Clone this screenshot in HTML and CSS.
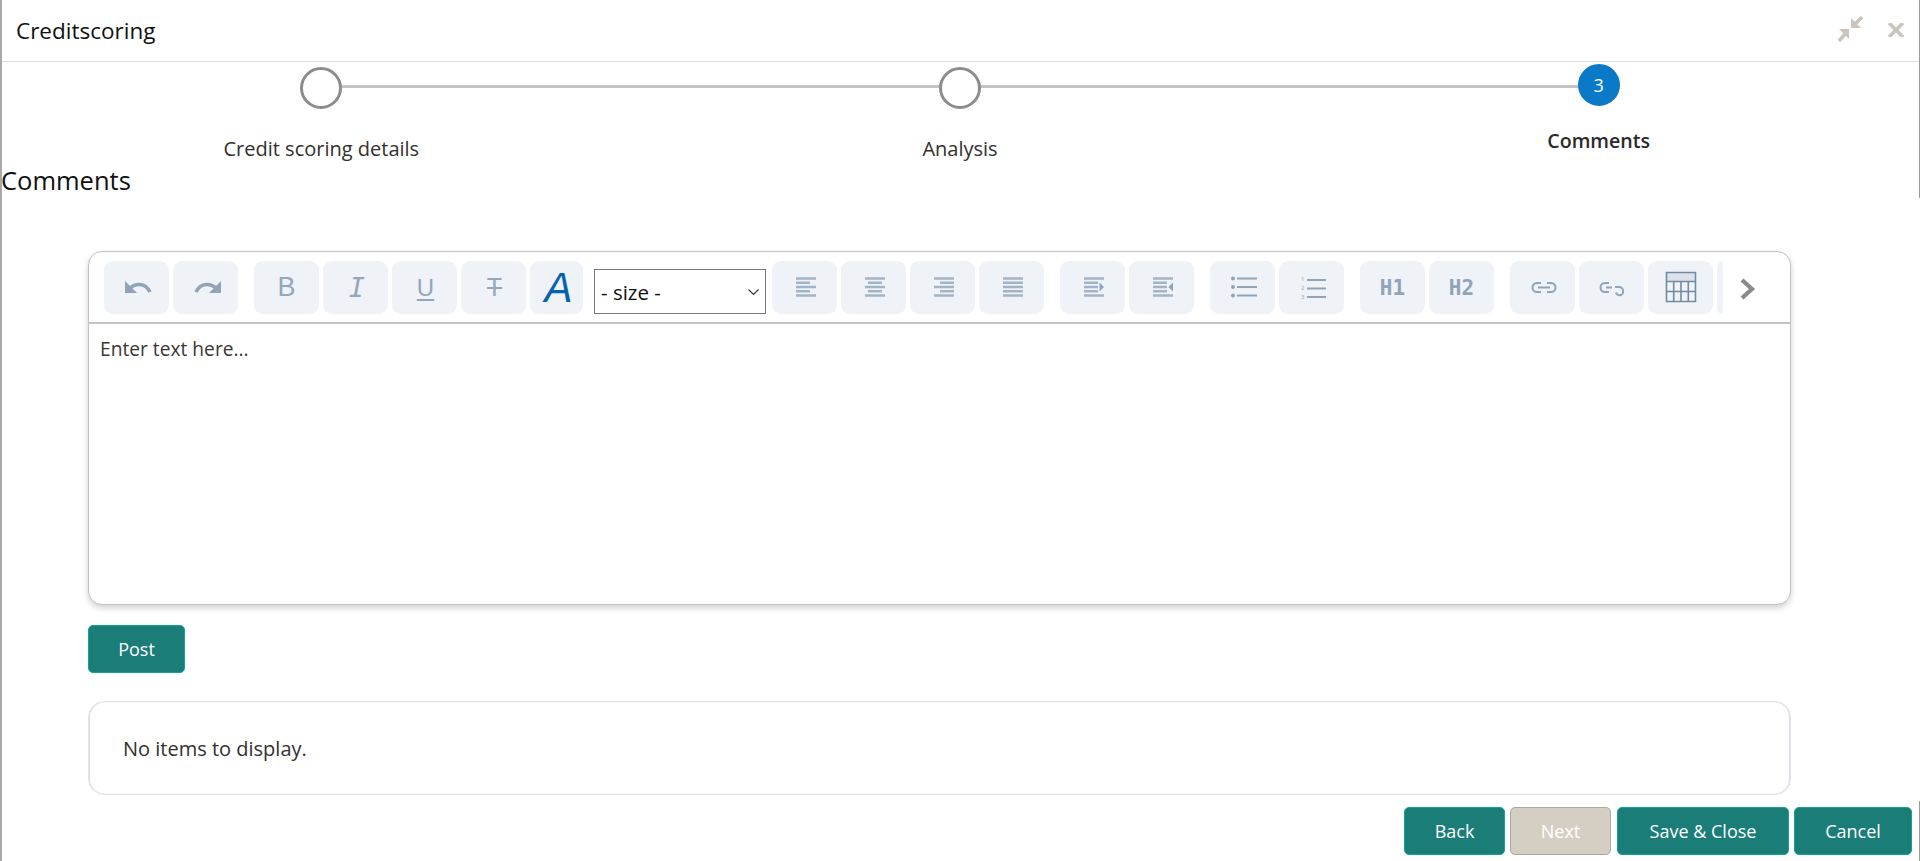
FILE: index.html
```html
<!DOCTYPE html>
<html lang="en">
<head>
<meta charset="utf-8">
<title>Creditscoring</title>
<link rel="stylesheet" href="styles.css">
</head>
<body>
<div class="page">
  <span class="edge edge-top"></span>
  <span class="edge edge-bottom"></span>
  <header class="header">
    <h1 class="title">Creditscoring</h1>
    <div class="window-actions">
      <svg class="ico-compress" viewBox="0 0 26 26" width="26" height="26"><path class="wa-fill" d="M14 12V2l10 10z"/><path class="wa-line" d="M17 9l8-8"/><path class="wa-fill" d="M12 13H2l10 10z"/><path class="wa-line" d="M9 17l-7 8"/></svg>
      <svg class="ico-close" viewBox="0 0 16 14" width="16" height="14"><path class="wa-line" d="M1 0l14 14M15 0L1 14"/></svg>
    </div>
  </header>

  <ol class="stepper">
    <li class="step step-first"><span class="dot"></span><span class="step-label">Credit scoring details</span></li>
    <li class="step step-mid"><span class="dot"></span><span class="step-label">Analysis</span></li>
    <li class="step step-current"><span class="dot dot-current">3</span><span class="step-label">Comments</span></li>
  </ol>

  <h2 class="section-title">Comments</h2>

  <main class="content">
    <section class="editor">
      <div class="toolbar">
        <div class="group">
          <button class="tb"><svg viewBox="0 0 65 53"><path class="f" d="M21 20v12h12z"/><path class="s3" d="M25 28c6-6 16-7 21 3"/></svg></button>
          <button class="tb"><svg viewBox="0 0 65 53"><path class="f" d="M48 20v12H36z"/><path class="s3" d="M44 28c-6-6-16-7-21 3"/></svg></button>
        </div>
        <div class="group">
          <button class="tb tb-b">B</button>
          <button class="tb tb-i">I</button>
          <button class="tb tb-u">U</button>
          <button class="tb tb-t">T</button>
          <button class="tb tb-a">A</button>
          <div class="size-wrap">
            <select class="size"><option>- size -</option></select>
            <svg class="size-arrow" viewBox="0 0 11 6" width="11" height="6"><path d="M.5.5l5 5 5-5"/></svg>
          </div>
          <button class="tb"><svg viewBox="0 0 65 53"><path class="l" d="M24 17.5h20M24 21.8h14M24 26h20M24 30.2h14M24 34.5h20"/></svg></button>
          <button class="tb"><svg viewBox="0 0 65 53"><path class="l" d="M24 17.5h20M27 21.8h14M24 26h20M27 30.2h14M24 34.5h20"/></svg></button>
          <button class="tb"><svg viewBox="0 0 65 53"><path class="l" d="M24 17.5h20M30 21.8h14M24 26h20M30 30.2h14M24 34.5h20"/></svg></button>
          <button class="tb"><svg viewBox="0 0 65 53"><path class="l" d="M24 17.5h20M24 21.8h20M24 26h20M24 30.2h20M24 34.5h20"/></svg></button>
        </div>
        <div class="group">
          <button class="tb"><svg viewBox="0 0 65 53"><path class="l" d="M24 17.5h20M24 21.8h14M24 26h14M24 30.2h14M24 34.5h20"/><path class="f" d="M39.500 21.500l4.500 4.500-4.500 4.500z"/></svg></button>
          <button class="tb"><svg viewBox="0 0 65 53"><path class="l" d="M24 17.500h20M24 21.800h14M24 26h14M24 30.200h14M24 34.500h20"/><path class="f" d="M44 21.500l-4.500 4.500 4.500 4.500z"/></svg></button>
        </div>
        <div class="group">
          <button class="tb"><svg viewBox="0 0 65 53"><circle class="f" cx="23" cy="17.500" r="2"/><circle class="f" cx="23" cy="26" r="2"/><circle class="f" cx="23" cy="34.500" r="2"/><path class="l2" d="M27 17.500h20M27 26h20M27 34.500h20"/></svg></button>
          <button class="tb"><svg viewBox="0 0 65 53"><text class="num" x="22" y="20">1</text><text class="num" x="22" y="29">2</text><text class="num" x="22" y="38">3</text><path class="l2" d="M28 19h19M28 27.500h19M28 36h19"/></svg></button>
        </div>
        <div class="group">
          <button class="tb tb-h">H1</button>
          <button class="tb tb-h">H2</button>
        </div>
        <div class="group">
          <button class="tb"><svg viewBox="0 0 65 53"><path class="s2" d="M31 22h-4a4.500 4.500 0 0 0 0 9h4M37 22h4a4.500 4.500 0 0 1 0 9h-4M28 26.500h12"/></svg></button>
          <button class="tb"><svg viewBox="0 0 65 53"><path class="s2" d="M30 22h-4a4.500 4.500 0 0 0 0 9h4M33 26.500h-6M36 26h4a4 4 0 0 1 4 4 3.500 3.500 0 0 1-7 1.500"/></svg></button>
          <button class="tb"><svg viewBox="0 0 65 53"><rect class="grid-head" x="18.500" y="11.500" width="29" height="9"/><path class="grid" d="M18.500 11.500h29v29h-29zM18.500 20.500h29M18.500 30.500h29M25.700 20.500v20M33 20.500v20M40.300 20.500v20"/></svg></button>
          <span class="tb tb-clip"></span>
        </div>
        <svg class="chevron" viewBox="0 0 16 22" width="16" height="22"><path d="M2 2l10 9-10 9"/></svg>
      </div>
      <div class="editor-body">Enter text here...</div>
    </section>

    <button class="btn btn-post">Post</button>

    <section class="list-card">No items to display.</section>
  </main>

  <footer class="footer">
    <button class="btn btn-back">Back</button>
    <button class="btn btn-next">Next</button>
    <button class="btn btn-save">Save &amp; Close</button>
    <button class="btn btn-cancel">Cancel</button>
  </footer>
</div>
</body>
</html>
```
FILE: styles.css
```css
* { box-sizing: border-box; }
html, body { margin: 0; height: 100%; background: #fff; }
body { font-family: "Open Sans", "Noto Sans", sans-serif; color: #2c2a28; overflow: hidden; }

.page {
  position: relative;
  height: 861px;
  border-left: 2px solid #a9a9a9;
  display: flex;
  flex-direction: column;
}
.edge { position: absolute; right: 0; width: 1px; background: #9a9a9a; }
.edge-top { top: 0; height: 198px; }
.edge-bottom { top: 801px; bottom: 0; }

.header {
  height: 62px;
  flex: none;
  display: flex;
  align-items: center;
  justify-content: space-between;
  border-bottom: 1px solid #dcdcdc;
  padding: 0 16px 0 14px;
}
.title { margin: 0; font-size: 22.5px; font-weight: 400; color: #111; }
.window-actions { display: flex; align-items: flex-start; height: 26px; margin-top: -1px; }
.ico-compress { display: block; margin-right: 25px; margin-top: -1px; }
.ico-close { display: block; margin-top: 6px; }
.wa-fill { fill: #c9c5bd; }
.wa-line { fill: none; stroke: #c9c5bd; stroke-width: 3.6; }

.stepper {
  list-style: none;
  margin: 0;
  padding: 0 2px 0 0;
  height: 101px;
  flex: none;
  display: grid;
  grid-template-columns: repeat(3, 1fr);
}
.step { position: relative; display: flex; flex-direction: column; align-items: center; }
.step-first { padding-top: 5px; }
.step-mid { padding-top: 5px; }
.step-current { padding-top: 2px; }
.dot {
  width: 42px;
  height: 42px;
  border: 3px solid #8c8c8c;
  border-radius: 50%;
  background: #fff;
  position: relative;
  z-index: 1;
  flex: none;
}
.dot-current {
  background: #0a7ac8;
  border-color: #0a7ac8;
  color: #fff;
  font-size: 18px;
  display: flex;
  align-items: center;
  justify-content: center;
}
.step::after {
  content: "";
  position: absolute;
  top: 23px;
  left: 50%;
  width: 100%;
  height: 3px;
  background: #c4c4c4;
}
.step-current::after { display: none; }
.step-label { margin-top: 27px; font-size: 20px; line-height: 26px; color: #33302d; white-space: nowrap; }
.step-current .step-label { margin-top: 22px; font-size: 19.6px; font-weight: 600; color: #2a2a2a; }

.section-title { margin: 1px 0 0 -1px; font-size: 25.5px; line-height: 32px; font-weight: 400; color: #111; flex: none; }

.content { flex: 1; padding: 55px 129px 0 86px; min-height: 0; }

.editor {
  height: 354px;
  border: 1px solid #c2c2c2;
  border-radius: 14px;
  box-shadow: 0 3px 6px rgba(0, 0, 0, .18);
  background: #fff;
}
.toolbar {
  height: 72px;
  border-bottom: 2px solid #c4c4c4;
  padding: 9px 0 0 15px;
  display: flex;
  gap: 16px;
}
.group { display: flex; gap: 4px; height: 53px; }
.tb {
  width: 65px;
  height: 53px;
  padding: 0;
  border: 0;
  border-radius: 9px;
  background: #eff2f7;
  color: #93a6bb;
  display: flex;
  align-items: center;
  justify-content: center;
}
.tb svg { display: block; width: 65px; height: 53px; }
.f { fill: #8fa3b9; }
.s3 { fill: none; stroke: #8fa3b9; stroke-width: 3.4; }
.s2 { fill: none; stroke: #8fa3b9; stroke-width: 2; }
.l { fill: none; stroke: #a3b4c6; stroke-width: 2.4; }
.l2 { fill: none; stroke: #8fa3b9; stroke-width: 2; }
.num { font-family: "Open Sans", sans-serif; font-size: 6px; fill: #8fa3b9; }
.grid { fill: none; stroke: #6f8aa6; stroke-width: 1.6; }
.grid-head { fill: #dbe2ea; }

.tb-b { font-size: 27px; }
.tb-i { font-family: "DejaVu Sans Mono", monospace; font-style: italic; font-size: 27px; padding-left: 3px; }
.tb-u { font-size: 24px; padding-left: 2px; text-decoration: underline; text-decoration-thickness: 2px; text-underline-offset: 3px; }
.tb-t { font-size: 25px; text-decoration: line-through; text-decoration-thickness: 2px; padding-left: 2px; }
.tb-a { width: 53px; padding-left: 4px; font-family: "Liberation Sans", sans-serif; font-style: italic; font-size: 42px; color: #0563ad; }
.tb-h { font-family: "DejaVu Sans Mono", monospace; font-weight: 700; font-size: 21px; color: #8fa3b9; }
.tb-clip { width: 6px; border-radius: 9px 0 0 9px; }

.size-wrap { position: relative; margin: 8px 2px 0 7px; height: 45px; }
.size {
  display: block;
  width: 172px;
  height: 45px;
  padding: 0 0 0 6px;
  border: 1px solid #767676;
  border-radius: 0;
  background: #fff;
  appearance: none;
  font-family: "Open Sans", sans-serif;
  font-size: 20.5px;
  color: #111;
}
.size-arrow { position: absolute; right: 7px; top: 20px; }
.size-arrow path { fill: none; stroke: #333; stroke-width: 1.1; }
.chevron { margin: 17px 0 0 1px; display: block; }
.chevron path { fill: none; stroke: #8a8a8a; stroke-width: 4.2; }

.editor-body { padding: 12px 11px; font-size: 19.2px; line-height: 26px; color: #3a3733; }

.btn {
  height: 48px;
  border: 1px solid #0ea594;
  border-radius: 5px;
  background: #1b7d78;
  color: #fff;
  font-family: "Open Sans", sans-serif;
  font-size: 18px;
  padding: 0;
}
.btn-post { display: block; width: 97px; margin-top: 20px; }
.list-card {
  margin-top: 28px;
  height: 94px;
  border: 1px solid #dfe5ea;
  border-radius: 16px;
  padding: 34px 34px 0;
  font-size: 20px;
  line-height: 26px;
  color: #33302d;
  box-shadow: inset 1px 0 1px #d5dbe2, inset -1px 0 1px #d5dbe2;
}

.footer {
  height: 54px;
  flex: none;
  display: flex;
  align-items: flex-start;
  padding-right: 8px;
  justify-content: flex-end;
  gap: 5px;
}
.btn-back, .btn-next { width: 101px; }
.btn-next { background: #d5cfc3; border-color: #a8a8a0; }
.btn-save { width: 172px; margin-left: 1px; }
.btn-cancel { width: 118px; }
```
